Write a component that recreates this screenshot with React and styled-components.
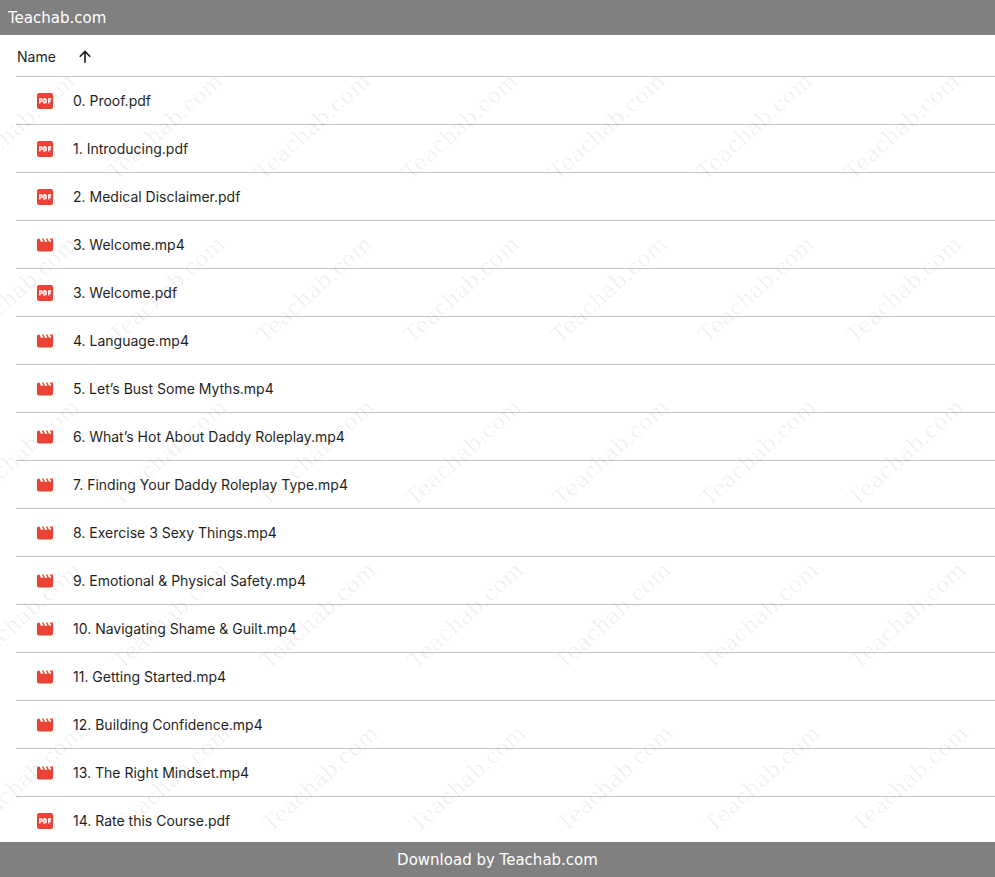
import React, { useState } from 'react';
import styled, { createGlobalStyle } from 'styled-components';

const GlobalStyle = createGlobalStyle`
  * {
    box-sizing: border-box;
  }

  body {
    margin: 0;
    background: #fff;
  }
`;

const Page = styled.div`
  display: flex;
  flex-direction: column;
  height: 100vh;
  overflow: hidden;
`;

const Bar = styled.div`
  display: flex;
  flex: none;
  align-items: center;
  justify-content: ${(props) => props.$align || 'flex-start'};
  height: 35px;
  padding: 0 8px;
  background: #808080;
  color: #fff;
  font-family: 'DejaVu Sans', Verdana, sans-serif;
  font-size: 15px;
  line-height: 20px;
`;

const Content = styled.main`
  position: relative;
  flex: 1;
  min-height: 0;
  padding-left: 16px;
  overflow: hidden;
`;

const FileTable = styled.table`
  width: 100%;
  border-collapse: separate;
  border-spacing: 0;
  color: #1f1f1f;
  font-family: Inter, 'Google Sans', sans-serif;
  font-size: 14px;
  line-height: 20px;
  text-align: left;
`;

const HeadCell = styled.th`
  height: 42px;
  padding: 0 1px;
  border-bottom: 1px solid #c4c4c4;
  font-weight: 400;
`;

const SortButton = styled.button`
  display: flex;
  align-items: center;
  gap: 19px;
  padding: 2px 0 0;
  border: 0;
  background: none;
  color: inherit;
  font: inherit;
  cursor: pointer;
`;

const Arrow = styled.svg`
  width: 20px;
  height: 20px;
  fill: #1f1f1f;
  transform: ${(props) => (props.$down ? 'rotate(180deg)' : 'none')};
`;

const Cell = styled.td`
  height: 48px;
  padding: 0 0 0 21px;
  border-bottom: 1px solid #c4c4c4;
`;

const FileName = styled.div`
  display: flex;
  align-items: center;
  gap: 20px;
  white-space: nowrap;
`;

const FileIcon = styled.svg`
  flex: none;
  width: 16px;
  height: 16px;
  fill: #ea4335;
`;

const WatermarkLayer = styled.svg`
  position: absolute;
  inset: 0;
  width: 100%;
  height: 100%;
  pointer-events: none;
  fill: #000;
  fill-opacity: 0.06;
  font-family: 'DejaVu Serif', serif;
  font-size: 22px;
`;

const files = [
  '0. Proof.pdf',
  '1. Introducing.pdf',
  '2. Medical Disclaimer.pdf',
  '3. Welcome.mp4',
  '3. Welcome.pdf',
  '4. Language.mp4',
  '5. Let’s Bust Some Myths.mp4',
  '6. What’s Hot About Daddy Roleplay.mp4',
  '7. Finding Your Daddy Roleplay Type.mp4',
  '8. Exercise 3 Sexy Things.mp4',
  '9. Emotional & Physical Safety.mp4',
  '10. Navigating Shame & Guilt.mp4',
  '11. Getting Started.mp4',
  '12. Building Confidence.mp4',
  '13. The Right Mindset.mp4',
  '14. Rate this Course.pdf',
];

function PdfIcon() {
  return (
    <FileIcon viewBox='0 0 16 16' aria-hidden='true'>
      <rect width='16' height='16' rx='2' />
      <path
        d='M2.7 10.5V6h1.4a1.2 1.2 0 0 1 0 2.5H2.7M7 6v3.9h.8c.9 0 1.4-.5 1.4-1.2V7.2c0-.7-.5-1.2-1.4-1.2zM11.7 10.5V6h2.6M11.7 8.2h2.2'
        fill='none'
        stroke='#fff'
        strokeWidth='1.4'
      />
    </FileIcon>
  );
}

function VideoIcon() {
  return (
    <FileIcon viewBox='2 2 20 20' aria-hidden='true'>
      <path d='M18 4l2 4h-3l-2-4h-2l2 4h-3l-2-4H8l2 4H7L5 4H4c-1.1 0-1.99.9-1.99 2L2 18c0 1.100.9 2 2 2h16c1.100 0 2-.9 2-2V4h-4z' />
    </FileIcon>
  );
}

function Watermark() {
  const marks = [];
  for (let row = 0; row < 5; row += 1) {
    for (let col = 0; col < 7; col += 1) {
      marks.push({ x: -32 + col * 147.4 + row * 2, y: 146 + row * 163 });
    }
  }

  return (
    <WatermarkLayer aria-hidden='true'>
      {marks.map(({ x, y }) => (
        <text key={`${x}-${y}`} transform={`translate(${x} ${y}) rotate(-42)`}>
          Teachab.com
        </text>
      ))}
    </WatermarkLayer>
  );
}

function App() {
  const [descending, setDescending] = useState(false);
  const rows = descending ? [...files].reverse() : files;

  return (
    <>
      <GlobalStyle />
      <Page>
        <Bar as='header'>Teachab.com</Bar>
        <Content>
          <FileTable>
            <thead>
              <tr>
                <HeadCell scope='col' aria-sort={descending ? 'descending' : 'ascending'}>
                  <SortButton type='button' onClick={() => setDescending(!descending)}>
                    Name
                    <Arrow viewBox='0 0 24 24' $down={descending} aria-hidden='true'>
                      <path d='M5 11l1.4 1.4L11 7.8V19h2V7.8l4.6 4.6L19 11l-7-7-7 7z' />
                    </Arrow>
                  </SortButton>
                </HeadCell>
              </tr>
            </thead>
            <tbody>
              {rows.map((name) => (
                <tr key={name}>
                  <Cell>
                    <FileName>
                      {name.endsWith('.pdf') ? <PdfIcon /> : <VideoIcon />}
                      {name}
                    </FileName>
                  </Cell>
                </tr>
              ))}
            </tbody>
          </FileTable>
          <Watermark />
        </Content>
        <Bar as='footer' $align='center'>
          Download by Teachab.com
        </Bar>
      </Page>
    </>
  );
}

export default App;
